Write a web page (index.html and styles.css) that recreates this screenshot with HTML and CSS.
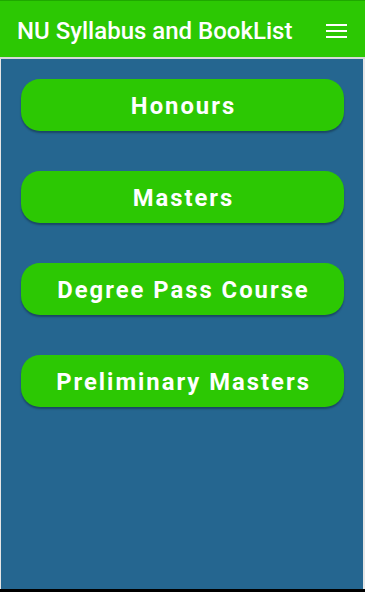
FILE: index.html
```html
<!DOCTYPE html>
<html>
<head>
<meta charset="utf-8">
<link rel="stylesheet" href="styles.css">
</head>
<body>
<div class="app">
  <header class="bar">
    <h1 class="title">NU Syllabus and BookList</h1>
    <div class="menu" aria-label="menu">
      <svg width="21" height="14" viewBox="0 0 21 14"><rect x="0" y="0" width="21" height="2" fill="#fff"/><rect x="0" y="6" width="21" height="2" fill="#fff"/><rect x="0" y="12" width="21" height="2" fill="#fff"/></svg>
    </div>
  </header>
  <main class="content">
    <button class="btn">Honours</button>
    <button class="btn">Masters</button>
    <button class="btn">Degree Pass Course</button>
    <button class="btn">Preliminary Masters</button>
  </main>
  <div class="navbar"></div>
</div>
</body>
</html>
```

FILE: styles.css
```css
html, body {
  margin: 0;
  padding: 0;
  height: 100%;
}
body {
  font-family: Roboto, "Noto Sans", sans-serif;
  background: #000;
}
.app {
  display: flex;
  flex-direction: column;
  height: 592px;
  width: 365px;
}
.bar {
  height: 56px;
  background: #2cc803;
  border-top: 1px solid #1fa800;
  border-bottom: 2px solid #d8d8d8;
  display: flex;
  align-items: center;
  justify-content: space-between;
  padding: 0 18px 0 17px;
  flex: none;
}
.title {
  margin: 0;
  color: #fff;
  font-size: 24px;
  font-weight: 500;
  letter-spacing: 0;
  padding-top: 3px;
}
.menu {
  display: flex;
  padding-top: 3px;
}
.content {
  flex: 1;
  background: #256690;
  border-left: 1px solid #e6e6e6;
  border-right: 2px solid #e6e6e6;
  display: flex;
  flex-direction: column;
  gap: 40px;
  padding: 20px 19px 0 20px;
}
.navbar {
  height: 3px;
  flex: none;
  background: #000;
}
.btn {
  height: 52px;
  border: none;
  border-radius: 19px;
  background: #2cc803;
  color: #fff;
  font-family: Roboto, "Noto Sans", sans-serif;
  font-weight: 700;
  font-size: 23.8px;
  letter-spacing: 2px;
  box-shadow: 0 2px 2px rgba(0, 0, 0, 0.3);
  padding: 2px 0 0 2px;
}
```
